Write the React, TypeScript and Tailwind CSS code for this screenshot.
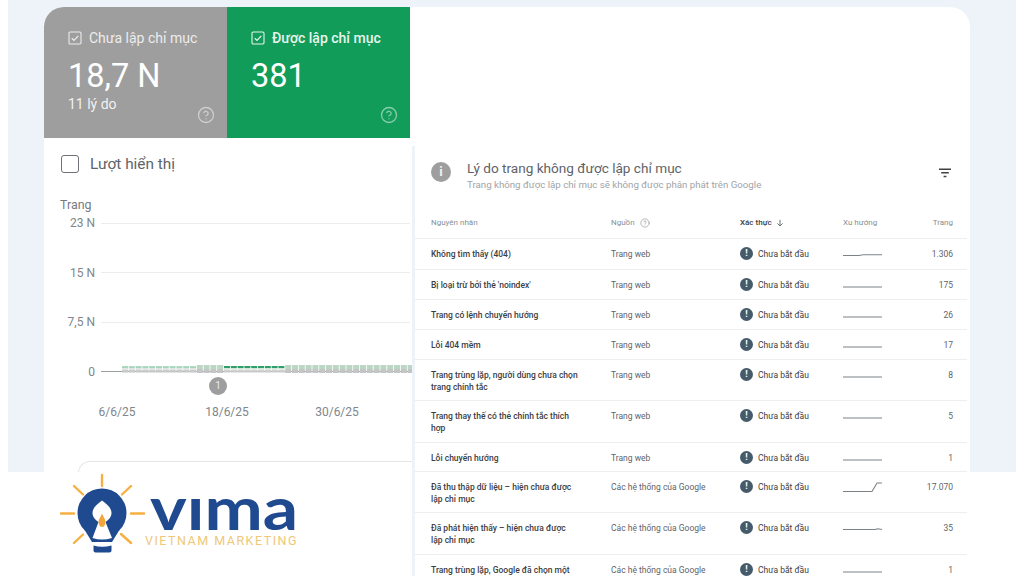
import { CircleHelp } from "lucide-react";

type Row = {
  name: string[];
  source: string;
  pages: string;
  trend?: string;
};

const rows: Row[] = [
  { name: ["Không tìm thấy (404)"], source: "Trang web", pages: "1.306", trend: "M0 6.5H16L20 5.8H39" },
  { name: ["Bị loại trừ bởi thẻ 'noindex'"], source: "Trang web", pages: "175" },
  { name: ["Trang có lệnh chuyển hướng"], source: "Trang web", pages: "26" },
  { name: ["Lỗi 404 mềm"], source: "Trang web", pages: "17" },
  { name: ["Trang trùng lặp, người dùng chưa chọn", "trang chính tắc"], source: "Trang web", pages: "8" },
  { name: ["Trang thay thế có thẻ chính tắc thích", "hợp"], source: "Trang web", pages: "5" },
  { name: ["Lỗi chuyển hướng"], source: "Trang web", pages: "1" },
  {
    name: ["Đã thu thập dữ liệu – hiện chưa được", "lập chỉ mục"],
    source: "Các hệ thống của Google",
    pages: "17.070",
    trend: "M0 9.5H29L34 1H39",
  },
  {
    name: ["Đã phát hiện thấy – hiện chưa được", "lập chỉ mục"],
    source: "Các hệ thống của Google",
    pages: "35",
    trend: "M0 6.5H32L35 5.7L39 6.5",
  },
  { name: ["Trang trùng lặp, Google đã chọn một"], source: "Các hệ thống của Google", pages: "1" },
];

const rowHeights = ["h-[31px]", "h-[30px]", "h-[30px]", "h-[30px]", "h-[41px]", "h-[42px]", "h-[29px]", "h-[41px]", "h-[42px]", "h-[42px]"];

function TileCheck() {
  return (
    <svg viewBox="0 0 14 14" className="h-[14px] w-[14px] shrink-0" fill="none" stroke="currentColor">
      <rect x="1" y="1" width="12" height="12" rx="1.2" strokeWidth="1.1" />
      <path d="M3.8 7.2L6 9.4L10.3 4.9" strokeWidth="1.3" />
    </svg>
  );
}

function Tile({ label, value, note, color, labelClass }: { label: string; value: string; note?: string; color: string; labelClass: string }) {
  return (
    <div className={`relative h-full w-[183px] px-6 pt-[22px] ${color}`}>
      <div className={`flex h-[18px] items-center gap-[7px] text-[14px] ${labelClass}`}>
        <TileCheck />
        <span>{label}</span>
      </div>
      <div className="mt-[10px] h-[38px] text-[32.5px] leading-[38px] text-white">{value}</div>
      {note && <div className="mt-[1px] text-[14px] leading-[16px] text-[#f1f1f1]">{note}</div>}
      <CircleHelp className="absolute bottom-[14px] right-[12px] h-[18px] w-[18px] text-white opacity-50" strokeWidth={1.7} />
    </div>
  );
}

function Bars() {
  // one tick per day, the colour bands follow the reference
  const ticks = Array.from({ length: 43 }, (_, i) => i);
  return (
    <svg viewBox="0 0 290 8" className="absolute left-[78px] top-px h-[8px] w-[290px]">
      {ticks.map((i) => {
        const x = i * 6.8;
        if (i < 11) {
          return (
            <g key={i}>
              <rect x={x} y="1.4" width="6" height="1.3" fill="#7fc4a0" />
              <rect x={x} y="3" width="6" height="1.4" fill="#dfe6e2" />
              <rect x={x} y="4.6" width="6.2" height="3" fill="#c9cbca" />
            </g>
          );
        }
        if (i >= 15 && i <= 23) {
          return (
            <g key={i}>
              <rect x={x} y="1" width="6" height="2" fill="#2f9e6b" />
              <rect x={x} y="3" width="6.2" height="1.2" fill="#cfe6d8" />
              <rect x={x} y="4.6" width="6.2" height="3" fill="#cdcfce" />
            </g>
          );
        }
        return (
          <g key={i}>
            <rect x={x} y="0" width="6" height="4" fill="#bcd6c6" />
            <rect x={x} y="4" width="6" height="4" fill="#c4c6c5" />
          </g>
        );
      })}
    </svg>
  );
}

function Chart() {
  const ticks = ["23 N", "15 N", "7,5 N", "0"];
  return (
    <div className="w-[368px] shrink-0 pt-[17px]">
      <div className="ml-[17px] flex h-[18px] items-center gap-[11px]">
        <div className="h-[18px] w-[18px] rounded-[3px] border border-[#6f7377]" />
        <span className="mt-px text-[15.4px] text-[#5f6368]">Lượt hiển thị</span>
      </div>
      <div className="ml-[16px] mt-[24px] h-[16px] text-[12.4px] leading-[16px] text-[#777b80]">Trang</div>
      <div className="mt-[2px] flex flex-col gap-[33.67px]">
        {ticks.map((t) => (
          <div key={t} className="relative flex h-[16px] items-center gap-[6px]">
            <span className="w-[51px] text-right text-[12px] text-[#80868b]">{t}</span>
            <div className={`mr-[2px] h-px flex-1 ${t === "0" ? "bg-[#9a9ea2]" : "bg-[#ececec]"}`} />
            {t === "0" && <Bars />}
          </div>
        ))}
      </div>
      <div className="-mt-[3px] ml-[165px] flex h-[18px] w-[18px] items-center justify-center rounded-full bg-[#9e9ea0] text-[10px] text-[#e8e8e8]">1</div>
      <div className="mt-[9px] flex pl-[18px] text-[12px] leading-[16px] text-[#80868b]">
        <span className="w-[110px] text-center">6/6/25</span>
        <span className="w-[110px] text-center">18/6/25</span>
        <span className="w-[110px] text-center">30/6/25</span>
      </div>
      <div className="ml-[34px] mt-[41px] h-[40px] rounded-tl-[12px] border-l border-t border-[#e6e6e6]" />
    </div>
  );
}

function Trend({ d }: { d?: string }) {
  return (
    <svg viewBox="0 0 39 11" className="mt-px h-[11px] w-[39px] shrink-0" fill="none" stroke="#7d8287" strokeWidth="1.1">
      <path d={d ?? "M0 7H39"} />
    </svg>
  );
}

function Status() {
  return (
    <div className="-mt-px flex w-[103px] shrink-0 items-center gap-[5px] text-[#3c4043]">
      <span className="flex h-[13px] w-[13px] items-center justify-center rounded-full bg-[#455a6b] text-[9px] font-bold leading-none text-white">!</span>
      <span>Chưa bắt đầu</span>
    </div>
  );
}

function ReasonPanel() {
  return (
    <div className="mt-2 h-[430px] w-[555px] shrink-0 border-l-[3px] border-[#eef2f9] bg-white">
      <div className="flex h-[59px] items-start pl-[16px] pr-[16px] pt-[13px]">
        <span className="mt-[3px] flex h-[20px] w-[20px] items-center justify-center rounded-full bg-[#9e9e9e] text-[13px] font-bold text-[#f2f2f2]">i</span>
        <div className="ml-[16px] flex-1">
          <div className="h-[18px] text-[13.6px] leading-[18px] text-[#5f6368]">Lý do trang không được lập chỉ mục</div>
          <div className="mt-[1px] text-[9.7px] leading-[14px] text-[#a0a4a8]">Trang không được lập chỉ mục sẽ không được phân phát trên Google</div>
        </div>
        <svg viewBox="0 0 12 10" className="mt-[9px] h-[10px] w-[12px]" fill="none" stroke="#3f4245" strokeWidth="1.5">
          <path d="M0 1.2H12M2.2 4.8H9.8M4.6 8.4H7.4" />
        </svg>
      </div>
      <div className="flex h-[34px] items-center border-b border-[#eeeeee] pl-[16px] pr-[14px] pt-[2px] text-[8px] text-[#8a8e92]">
        <span className="w-[180px]">Nguyên nhân</span>
        <span className="flex w-[129px] items-center gap-[5px]">
          Nguồn
          <CircleHelp className="h-[10px] w-[10px]" strokeWidth={1.5} />
        </span>
        <span className="flex w-[103px] items-center gap-[4px] font-medium text-[#3c4043]">
          Xác thực
          <svg viewBox="0 0 8 8" className="h-[8px] w-[8px]" fill="none" stroke="#5f6368" strokeWidth="0.9">
            <path d="M4 .8V7M1.4 4.4L4 7L6.6 4.4" />
          </svg>
        </span>
        <span>Xu hướng</span>
        <span className="ml-auto">Trang</span>
      </div>
      {rows.map((r, i) => (
        <div key={r.name[0]} className={`flex items-start border-b border-[#eeeeee] pl-[16px] pr-[14px] pt-[9px] text-[8.5px] leading-[12px] ${rowHeights[i]}`}>
          <div className="w-[180px] shrink-0 font-medium text-[#3c4043]">
            {r.name.map((line) => (
              <div key={line}>{line}</div>
            ))}
          </div>
          <div className="w-[129px] shrink-0 text-[#5f6368]">{r.source}</div>
          <Status />
          <Trend d={r.trend} />
          <div className="ml-auto text-[#5f6368]">{r.pages}</div>
        </div>
      ))}
    </div>
  );
}

function Logo() {
  return (
    <div className="absolute bottom-0 left-0 flex h-[104px] w-[411px] items-start bg-white pl-[58px]">
      <svg viewBox="58 472 90 84" className="h-[84px] w-[90px] shrink-0">
        <g stroke="#f5b041" strokeWidth="2.4" strokeLinecap="round">
          <path d="M102 475V486M61 513.5H74M131 513.5H144M74 486L83 494.5M131 486L122 494.5M74 543L83 534.5M131 543L121 534" />
        </g>
        <circle cx="102" cy="513" r="24.5" fill="#1f4a8f" />
        <path d="M84 529H120L112 542H92Z" fill="#1f4a8f" />
        <path d="M93.5 545.5Q102 548 111.5 545.5V550.5Q111.5 552.5 109.5 552.5H95.5Q93.5 552.5 93.5 550.5Z" fill="#1f4a8f" />
        <path d="M102 500.5C97 504 92.5 508 92.5 513C92.5 517.5 96 520 98.5 522L92.5 538Q102 541 112 538L105.5 522C108 520 111.5 517.5 111.5 513C111.5 508 107 504 102 500.5Z" fill="#ffffff" />
        <path d="M102 513.5C100.5 517 98.5 519.5 98.5 522C98.5 525 100.5 527 102 527C103.5 527 105.5 525 105.5 522C105.5 519.5 103.5 517 102 513.5Z" fill="#f5a63a" />
      </svg>
      <div className="-ml-[3px] pt-[13px]">
        <div className="ml-[5px] h-[44px] origin-left scale-x-[1.16] text-[60px] font-bold leading-[44px] text-[#1f4a8f] [font-family:Lato,sans-serif]">vıma</div>
        <div className="mt-[5px] whitespace-nowrap text-[12.5px] leading-[14px] tracking-[1.5px] text-[#eec878]">VIETNAM MARKETING</div>
      </div>
    </div>
  );
}

export default function App() {
  return (
    <div className="relative h-[576px] w-[1024px] overflow-hidden bg-white [font-family:Roboto,sans-serif]">
      <div className="mx-2 h-[472px] bg-[#eef2f9] pl-[36px] pr-[46px] pt-[7px]">
        <div className="h-[569px] rounded-t-[20px] bg-white">
          <div className="flex h-[131px] overflow-hidden rounded-tl-[20px]">
            <Tile label="Chưa lập chỉ mục" value="18,7 N" note="11 lý do" color="bg-[#9e9e9e]" labelClass="text-[#ececec]" />
            <Tile label="Được lập chỉ mục" value="381" color="bg-[#129c59]" labelClass="font-medium text-[#e8f5ee]" />
          </div>
          <div className="flex">
            <Chart />
            <ReasonPanel />
          </div>
        </div>
      </div>
      <Logo />
    </div>
  );
}
